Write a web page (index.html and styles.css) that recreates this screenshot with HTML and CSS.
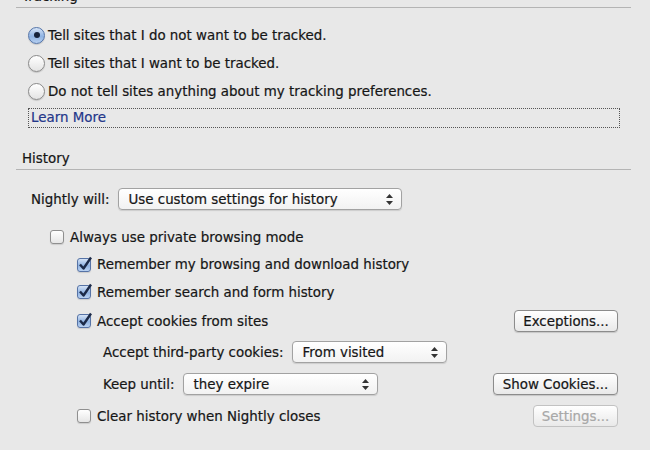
FILE: index.html
```html
<!DOCTYPE html>
<html>
<head>
    <title>Privacy</title>
    <link rel="stylesheet" href="styles.css">
</head>
<body>
    <div class="pane">
        <div class="group-head tracking-head">Tracking</div>
        <div class="radios">
            <div class="row">
                <span class="radio checked"></span>
                <span>Tell sites that I do not want to be tracked.</span>
            </div>
            <div class="row">
                <span class="radio"></span>
                <span>Tell sites that I want to be tracked.</span>
            </div>
            <div class="row">
                <span class="radio"></span>
                <span>Do not tell sites anything about my tracking preferences.</span>
            </div>
            <div class="learn-more">Learn More</div>
        </div>

        <div class="group-head history-head">History</div>
        <div class="history">
            <div class="row nightly-row">
                <span class="label">Nightly will:</span>
                <div class="select select-mode">
                    <span>Use custom settings for history</span>
                    <svg class="arrows" width="7" height="11" viewBox="0 0 7 11"><path d="M3.5 0L7 4H0Z M3.5 11L7 7H0Z" fill="#333"/></svg>
                </div>
            </div>
            <div class="row check-row level1">
                <span class="checkbox"></span>
                <span>Always use private browsing mode</span>
            </div>
            <div class="row check-row level2 h27">
                <span class="checkbox checked"><svg width="16" height="16" viewBox="0 0 16 16"><path d="M3 8.5L6.5 12.5L14 1.5" fill="none" stroke="#1c2a48" stroke-width="2.4" stroke-linejoin="round"/></svg></span>
                <span>Remember my browsing and download history</span>
            </div>
            <div class="row check-row level2">
                <span class="checkbox checked"><svg width="16" height="16" viewBox="0 0 16 16"><path d="M3 8.5L6.5 12.5L14 1.5" fill="none" stroke="#1c2a48" stroke-width="2.4" stroke-linejoin="round"/></svg></span>
                <span>Remember search and form history</span>
            </div>
            <div class="row check-row level2 h30">
                <span class="checkbox checked"><svg width="16" height="16" viewBox="0 0 16 16"><path d="M3 8.5L6.5 12.5L14 1.5" fill="none" stroke="#1c2a48" stroke-width="2.4" stroke-linejoin="round"/></svg></span>
                <span class="grow">Accept cookies from sites</span>
                <button class="btn btn-exceptions">Exceptions...</button>
            </div>
            <div class="row level3 h32">
                <span class="label">Accept third-party cookies:</span>
                <div class="select select-third">
                    <span>From visited</span>
                    <svg class="arrows" width="7" height="11" viewBox="0 0 7 11"><path d="M3.5 0L7 4H0Z M3.5 11L7 7H0Z" fill="#333"/></svg>
                </div>
            </div>
            <div class="row level3 h32">
                <span class="label">Keep until:</span>
                <div class="select select-keep">
                    <span>they expire</span>
                    <svg class="arrows" width="7" height="11" viewBox="0 0 7 11"><path d="M3.5 0L7 4H0Z M3.5 11L7 7H0Z" fill="#333"/></svg>
                </div>
                <span class="grow"></span>
                <button class="btn btn-cookies">Show Cookies...</button>
            </div>
            <div class="row check-row level2 h32">
                <span class="checkbox"></span>
                <span class="grow">Clear history when Nightly closes</span>
                <button class="btn btn-settings" disabled>Settings...</button>
            </div>
        </div>
    </div>
</body>
</html>
```

FILE: styles.css
```css
body {
    margin: 0;
    background-color: #e8e8e8;
    font-family: "DejaVu Sans", sans-serif;
    font-size: 13.4px;
    color: #161616;
    -webkit-text-stroke: 0.2px currentColor;
    overflow: hidden;
}
.pane {
    padding: 0 19px 0 16px;
    margin-top: -12px;
}
.group-head {
    border-bottom: 1px solid #b4b4b4;
    padding-left: 6px;
    height: 19px;
    line-height: 18px;
}
.radios {
    padding: 13px 11px 0 12px;
}
.row {
    display: flex;
    align-items: center;
    height: 28px;
}
.radio {
    width: 15px;
    height: 15px;
    border-radius: 50%;
    border: 1px solid #8a8a8a;
    background: linear-gradient(#ffffff, #e4e4e4);
    box-shadow: 0 1px 1px rgba(0, 0, 0, 0.15);
    margin-right: 3px;
    flex: none;
    display: flex;
    align-items: center;
    justify-content: center;
}
.radio.checked {
    border-color: #5474a8;
    background: linear-gradient(#d6e4f7, #8fb3e3 55%, #b6cff0);
}
.radio.checked::after {
    content: "";
    width: 6px;
    height: 6px;
    border-radius: 50%;
    background-color: #16223a;
}
.learn-more {
    margin-top: 3px;
    height: 18px;
    border: 1px dotted #555;
    color: #24378a;
    padding-left: 2px;
    line-height: 18px;
}
.history-head {
    margin-top: 22px;
}
.history {
    padding: 15px 13px 0 0;
}
.nightly-row {
    padding-left: 15px;
    margin-bottom: 10px;
}
.label {
    margin-right: 8px;
}
.select {
    display: flex;
    align-items: center;
    justify-content: space-between;
    box-sizing: border-box;
    height: 22px;
    padding: 0 8px 0 10px;
    border: 1px solid #a2a2a2;
    border-radius: 4px;
    background: linear-gradient(#ffffff, #f2f2f2);
    box-shadow: 0 1px 1px rgba(0, 0, 0, 0.12);
}
.select-mode {
    width: 284px;
}
.select-third {
    width: 155px;
}
.select-keep {
    width: 195px;
}
.checkbox {
    position: relative;
    box-sizing: border-box;
    width: 14px;
    height: 14px;
    border: 1px solid #8f8f8f;
    border-radius: 3px;
    background: linear-gradient(#ffffff, #e6e6e6);
    box-shadow: 0 1px 1px rgba(0, 0, 0, 0.12);
    margin-right: 6px;
    flex: none;
}
.checkbox.checked {
    border-color: #5673a6;
    background: linear-gradient(#d5e3f6, #90b3e2 55%, #b9d1f1);
}
.checkbox svg {
    position: absolute;
    left: -1px;
    top: -3px;
}
.level1 {
    padding-left: 34px;
}
.level2 {
    padding-left: 61px;
}
.level3 {
    padding-left: 87px;
}
.h27 {
    height: 27px;
}
.h30 {
    height: 30px;
}
.h32 {
    height: 32px;
}
.grow {
    flex: 1;
}
.btn {
    font-family: inherit;
    font-size: 13.4px;
    color: #161616;
    -webkit-text-stroke: 0.2px currentColor;
    height: 22px;
    border: 1px solid #8c8c8c;
    border-radius: 4px;
    background: linear-gradient(#ffffff, #e9e9e9);
    box-shadow: 0 1px 1px rgba(0, 0, 0, 0.15);
    padding: 0;
}
.btn-exceptions {
    width: 104px;
}
.btn-cookies {
    width: 125px;
}
.btn-settings {
    width: 85px;
    color: #a8a8a8;
    border-color: #c2c2c2;
    box-shadow: none;
}
```
